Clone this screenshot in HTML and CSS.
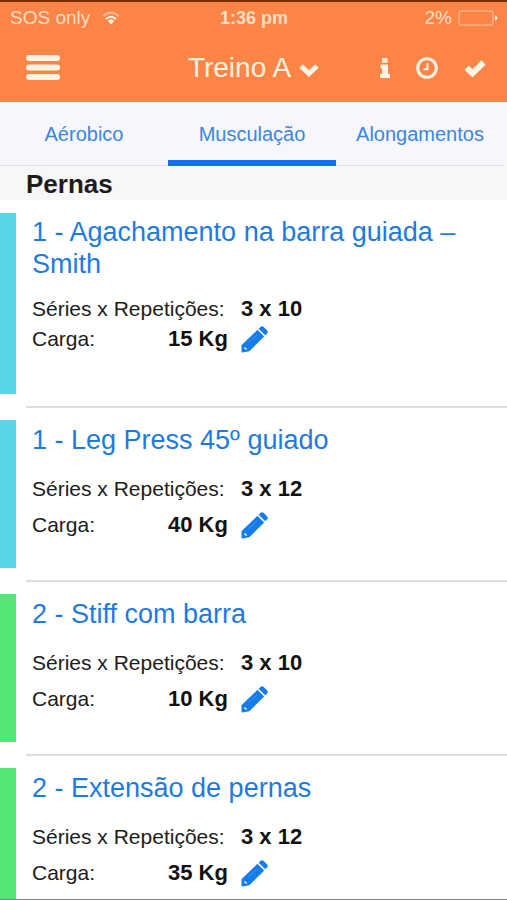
FILE: index.html
```html
<!DOCTYPE html>
<html lang="pt-BR">
<head>
<meta charset="utf-8">
<meta name="viewport" content="width=device-width, initial-scale=1">
<title>Treino A</title>
<link rel="stylesheet" href="styles.css">
</head>
<body>
<svg width="0" height="0" class="symbols" aria-hidden="true">
  <symbol id="pencil" viewBox="0 0 28 28">
    <path d="M17 4 24 11 8.500 26.300 1.500 27.500Q.5 27.500.5 26.500L.5 20z"/>
    <path d="M18.300 2.800 20.300.9q1.500-1.300 3 0l3.800 3.700q1.300 1.500 0 3L25.200 9.600z"/>
    <path class="pencil-line" d="M8 17.400 16.800 9"/>
    <path class="pencil-tip" d="M4.200 21.500 4.800 23 6.600 23.700 5.300 25 3 22.700z"/>
  </symbol>
</svg>
<div class="app">
  <header class="header">
    <div class="status">
      <div class="status-left">
        <span>SOS only</span>
        <svg class="wifi" viewBox="0 0 18 14" aria-hidden="true">
          <path class="wifi-faint" d="M1.200 5.200Q9-2 16.800 5.200"/>
          <path d="M4 8Q9 3.400 14 8"/>
          <path class="wifi-dot" d="M9 8.300q2 0 3.200 1.600L9 13.400 5.800 9.900Q7 8.300 9 8.300z"/>
        </svg>
      </div>
      <span class="time">1:36 pm</span>
      <div class="status-right">
        <span>2%</span>
        <svg class="battery" viewBox="0 0 40 16" aria-hidden="true">
          <rect x="1" y="1" width="34" height="14" rx="2"/>
          <path d="M37 5.500q2.500.5 2.500 2.500t-2.500 2.500z"/>
        </svg>
      </div>
    </div>
    <div class="toolbar">
      <button class="icon-button menu" type="button" aria-label="Menu">
        <svg width="34" height="26" viewBox="0 0 34 26"><path class="bars" d="M3 3H31M3 12.500H31M3 22H31"/></svg>
      </button>
      <button class="title" type="button">
        <span>Treino A</span>
        <svg width="20" height="20" viewBox="0 0 20 20"><path class="chevron" d="M2 8 10 15.500 18 8"/></svg>
      </button>
      <div class="actions">
        <button class="icon-button" type="button" aria-label="Informações">
          <svg width="10" height="20" viewBox="0 0 10 20"><path d="M2 0H7.500V4.800H2zM.5 6.500H8V16H10V20H0V16H2V10.200H.5z"/></svg>
        </button>
        <button class="icon-button" type="button" aria-label="Tempo">
          <svg width="22" height="22" viewBox="0 0 22 22"><circle class="ring" cx="11" cy="11" r="9.300"/><path class="hands" d="M11.500 6V12.200H7.500"/></svg>
        </button>
        <button class="icon-button" type="button" aria-label="Concluir">
          <svg width="22" height="18" viewBox="0 0 22 18"><path class="check" d="M2.500 8.800 8.500 14.200 19.500 3.500"/></svg>
        </button>
      </div>
    </div>
  </header>

  <nav class="tabs">
    <a class="tab" href="#aerobico">Aérobico</a>
    <a class="tab active" href="#musculacao" aria-current="page">Musculação</a>
    <a class="tab" href="#alongamentos">Alongamentos</a>
  </nav>

  <main class="content">
    <h1 class="group">Pernas</h1>
    <ul class="list">
      <li class="item compact">
        <div class="mark cyan"></div>
        <div class="body">
          <h2><a href="#agachamento">1 - Agachamento na barra guiada – Smith</a></h2>
          <div class="row"><span>Séries x Repetições:</span><strong>3 x 10</strong></div>
          <div class="row load"><span>Carga:</span><strong>15 Kg</strong><button class="edit" type="button" aria-label="Editar carga"><svg><use href="#pencil"/></svg></button></div>
        </div>
      </li>
      <li class="item">
        <div class="mark cyan"></div>
        <div class="body">
          <h2><a href="#legpress">1 - Leg Press 45º guiado</a></h2>
          <div class="row"><span>Séries x Repetições:</span><strong>3 x 12</strong></div>
          <div class="row load"><span>Carga:</span><strong>40 Kg</strong><button class="edit" type="button" aria-label="Editar carga"><svg><use href="#pencil"/></svg></button></div>
        </div>
      </li>
      <li class="item">
        <div class="mark green"></div>
        <div class="body">
          <h2><a href="#stiff">2 - Stiff com barra</a></h2>
          <div class="row"><span>Séries x Repetições:</span><strong>3 x 10</strong></div>
          <div class="row load"><span>Carga:</span><strong>10 Kg</strong><button class="edit" type="button" aria-label="Editar carga"><svg><use href="#pencil"/></svg></button></div>
        </div>
      </li>
      <li class="item">
        <div class="mark green"></div>
        <div class="body">
          <h2><a href="#extensao">2 - Extensão de pernas</a></h2>
          <div class="row"><span>Séries x Repetições:</span><strong>3 x 12</strong></div>
          <div class="row load"><span>Carga:</span><strong>35 Kg</strong><button class="edit" type="button" aria-label="Editar carga"><svg><use href="#pencil"/></svg></button></div>
        </div>
      </li>
    </ul>
  </main>
</div>
</body>
</html>
```
FILE: styles.css
```css
* { box-sizing: border-box; }

body {
  margin: 0;
  background: #fff;
  color: #1c1c1c;
  font-family: "Liberation Sans", Arial, sans-serif;
  font-size: 21px;
}

button {
  padding: 0;
  border: 0;
  background: none;
  color: inherit;
  font: inherit;
}

a { color: inherit; text-decoration: none; }
svg { display: block; flex: none; }
.symbols { position: absolute; }

.app {
  display: flex;
  flex-direction: column;
  height: 100vh;
  overflow: hidden;
  border-bottom: 1px solid #858585;
}

/* Header */
.header {
  flex: none;
  border-top: 2px solid #7c2d00;
  background: #fd8447;
  color: #fff3e4;
}

.header svg { fill: #fff3e4; }

.status {
  display: grid;
  grid-template-columns: 1fr auto 1fr;
  align-items: center;
  height: 32px;
  padding: 0 9px 0 10px;
  color: #ffdfc4;
  font-size: 19px;
}

.status-left, .status-right { display: flex; align-items: center; }
.status-left { gap: 12px; }
.status-right { justify-content: flex-end; gap: 6px; }
.time { font-size: 18px; font-weight: bold; }

.wifi { width: 18px; height: 14px; }
.wifi path { fill: none; stroke: #fff3e4; stroke-width: 2; }
.wifi .wifi-faint { stroke: #ffb78d; }
.wifi .wifi-dot { fill: #fff3e4; stroke: none; }

.battery { width: 40px; height: 16px; }
.battery rect { fill: none; stroke: #ffc9a3; stroke-width: 1; }

.toolbar {
  display: grid;
  grid-template-columns: 1fr auto 1fr;
  align-items: center;
  height: 68px;
  padding: 0 21px;
}

.menu { justify-self: start; padding-left: 5px; }
.title { display: flex; align-items: center; gap: 8px; font-size: 28px; }
.actions { display: flex; align-items: center; justify-content: flex-end; gap: 26px; }
.header .bars { fill: none; stroke: #fff3e4; stroke-width: 6; stroke-linecap: round; }
.header .chevron { fill: none; stroke: #fff3e4; stroke-width: 5; }
.header .ring { fill: none; stroke: #fff3e4; stroke-width: 3; }
.header .hands { fill: none; stroke: #fff3e4; stroke-width: 2; }
.header .check { fill: none; stroke: #fff3e4; stroke-width: 6; }

/* Tabs */
.tabs {
  display: grid;
  flex: none;
  grid-template-columns: repeat(3, 1fr);
  height: 64px;
  padding-right: 3px;
  background: #f7f7fb;
}

.tab {
  display: flex;
  align-items: center;
  justify-content: center;
  padding-top: 2px;
  border-bottom: 1px solid #e2e2e4;
  color: #3c86de;
  font-size: 20px;
}

.tab.active { padding-top: 7px; border-bottom: 6px solid #1273e0; }

/* Exercises */
.content { flex: 1; min-height: 0; overflow: hidden; }

.group {
  margin: 0;
  padding: 3px 26px 1px;
  background: #f7f7f7;
  font-size: 26px;
  line-height: 30px;
}

.list { margin: 0; padding: 1px 0 0; list-style: none; }
.item { display: flex; gap: 10px; }
.mark { flex: none; width: 16px; margin: 12px 0 14px; }
.cyan { background: #59d5e6; }
.green { background: #55e678; }

.body {
  flex: 1;
  padding: 16px 6px 40px;
  border-bottom: 2px solid #dedede;
}

.body h2 {
  margin: 0 0 18px;
  color: #1f7adf;
  font-size: 27px;
  font-weight: normal;
  line-height: 32px;
}

.row {
  display: grid;
  grid-template-columns: 209px auto;
  justify-content: start;
  align-items: center;
  height: 30px;
}

.row strong { color: #111; font-size: 22px; }
.load { grid-template-columns: 136px 73px auto; margin-top: 6px; }
.edit svg { width: 27px; height: 27px; fill: #137bea; }
.pencil-line { fill: none; stroke: #4a9bf2; stroke-width: 1; }
.pencil-tip { fill: #fff; }

.compact .body { padding: 15px 6px 52px; }
.compact h2 { margin-bottom: 14px; }
.compact .load { margin-top: 0; }
```
